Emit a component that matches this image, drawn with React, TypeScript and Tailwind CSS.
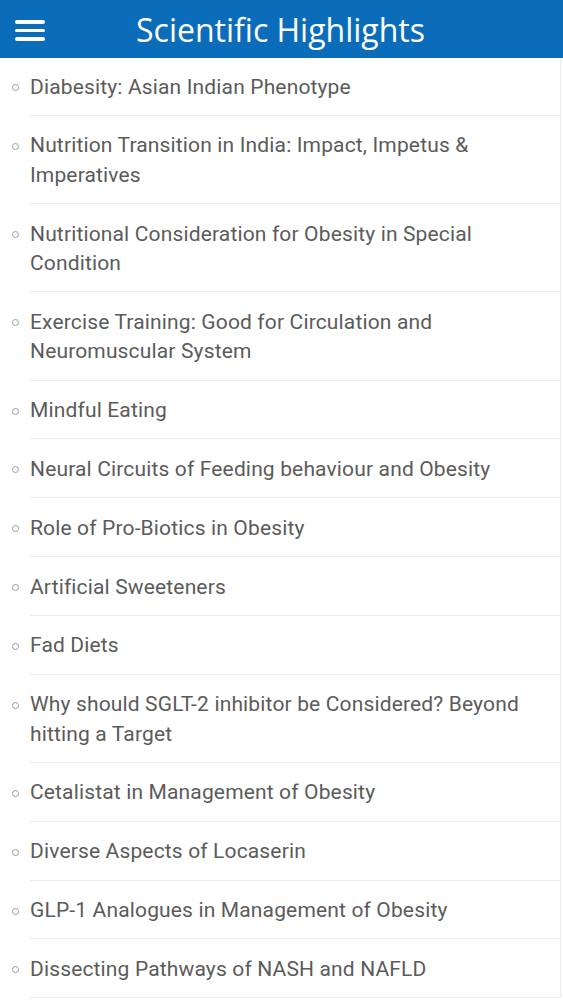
import React from "react";

const ITEMS = [
  "Diabesity: Asian Indian Phenotype",
  "Nutrition Transition in India: Impact, Impetus & Imperatives",
  "Nutritional Consideration for Obesity in Special Condition",
  "Exercise Training: Good for Circulation and Neuromuscular System",
  "Mindful Eating",
  "Neural Circuits of Feeding behaviour and Obesity",
  "Role of Pro-Biotics in Obesity",
  "Artificial Sweeteners",
  "Fad Diets",
  "Why should SGLT-2 inhibitor be Considered? Beyond hitting a Target",
  "Cetalistat in Management of Obesity",
  "Diverse Aspects of Locaserin",
  "GLP-1 Analogues in Management of Obesity",
  "Dissecting Pathways of NASH and NAFLD",
];

export default function App() {
  return (
    <div className="h-[1000px] w-[563px] overflow-hidden bg-white">
      <header className="relative flex h-[58px] items-center justify-center bg-[#0b6cb9]">
        <button className="absolute left-[15px] top-[20px] flex w-[30px] flex-col gap-[5px]">
          <span className="h-[3.5px] rounded-full bg-white" />
          <span className="h-[3.5px] rounded-full bg-white" />
          <span className="h-[3.5px] rounded-full bg-white" />
        </button>
        <h1 className="ml-[-2px] mt-[2px] font-['Open_Sans',sans-serif] text-[32px] leading-none text-white">
          Scientific Highlights
        </h1>
      </header>

      <ul className="mr-[2px] border-r border-[#ededed] font-['Roboto',sans-serif] text-[21px] leading-[29.5px] tracking-[0.15px] text-[#5b5b5b]">
        {ITEMS.map((t, i) => (
          <li key={t} className="flex">
            <span className={`flex w-[30px] shrink-0 justify-center ${i === 0 ? "pt-[14.5px]" : "pt-[15.5px]"}`}>
              <span className="mt-[11.5px] h-[7px] w-[7px] rounded-full border border-[#9a9a9a]" />
            </span>
            <span
              className={`flex-1 border-b border-[#ececec] pb-[12.8px] pr-[22px] ${i === 0 ? "pt-[14.5px]" : "pt-[15.5px]"}`}
            >
              {t}
            </span>
          </li>
        ))}
      </ul>
    </div>
  );
}
